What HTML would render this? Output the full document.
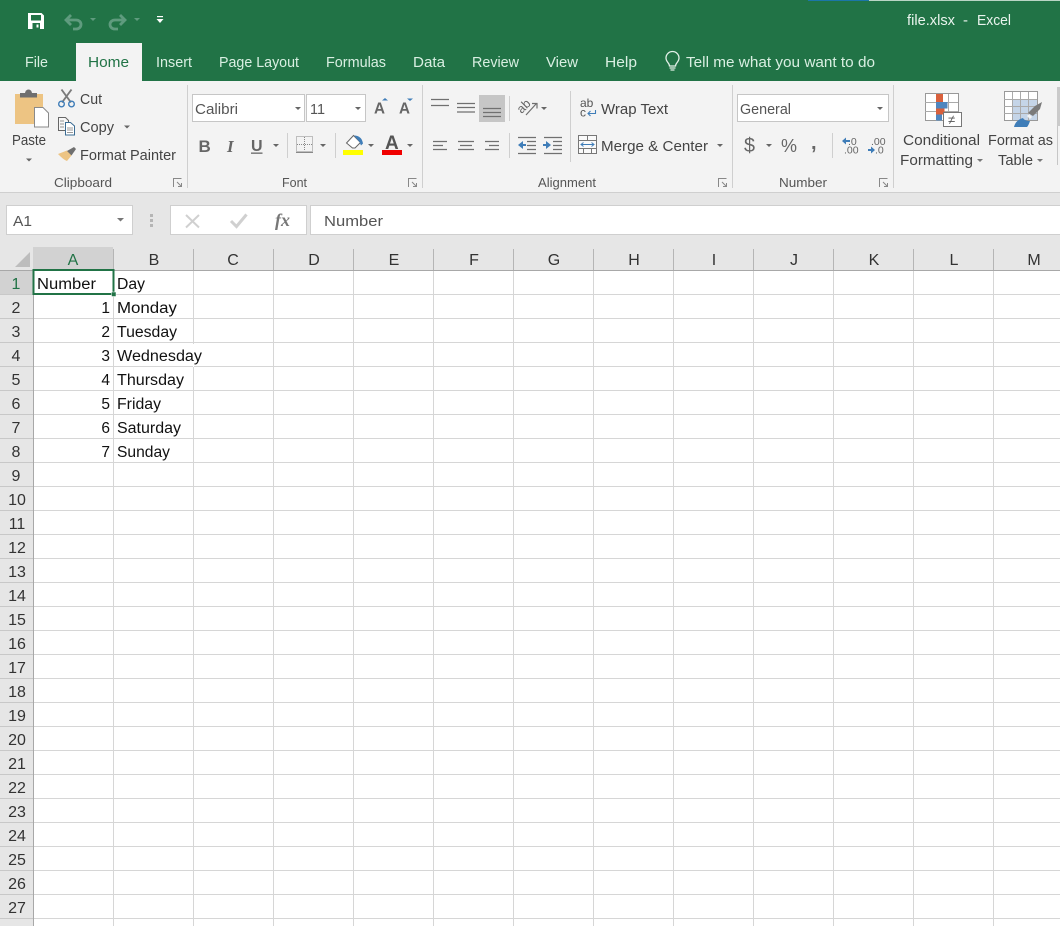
<!DOCTYPE html>
<html><head><meta charset="utf-8"><style>
html,body{margin:0;padding:0;width:1060px;height:926px;overflow:hidden;background:#fff}
svg{display:block}
text{font-family:"Liberation Sans",sans-serif;font-size:14px;fill:#444}
.t{fill:#d9efe2;font-size:15px}
.c{fill:#111;font-size:15.5px}
.h{fill:#333;font-size:16px}
.r{fill:#444;font-size:15px}
.g{fill:#555;font-size:13px}
</style></head><body>
<svg width="1060" height="926" viewBox="0 0 1060 926" xmlns="http://www.w3.org/2000/svg">
<defs>
<pattern id="hl" width="80" height="24" patternUnits="userSpaceOnUse" x="33" y="270"><rect x="0" y="0" width="80" height="1" fill="#d6d6d6"/></pattern>
<pattern id="vl" width="80" height="24" patternUnits="userSpaceOnUse" x="33" y="270"><rect x="0" y="0" width="1" height="24" fill="#d6d6d6"/></pattern>
<pattern id="rl" width="33" height="24" patternUnits="userSpaceOnUse" x="0" y="270"><rect x="0" y="0" width="33" height="1" fill="#c8c8c8"/></pattern>
</defs>
<!-- title bar -->
<rect width="1060" height="81" fill="#217346"/>
<rect x="808" width="61" height="1" fill="#1b76a8"/><rect x="869" width="191" height="1" fill="#b9d5c5"/>
<!-- save -->
<path d="M28 13h13.500l2.500 2.500V29H28z" fill="#fff"/><rect x="31" y="15" width="10" height="5.500" fill="#217346"/><rect x="32.500" y="23" width="7.500" height="6" fill="#217346"/><rect x="36.500" y="24.500" width="2" height="3" fill="#fff"/>
<!-- undo redo -->
<path d="M71 15l-5 5 5 5M66 20h10c3 0 5 2 5 4.500s-2 4.500-5 4.500h-3" fill="none" stroke="#5f9b7e" stroke-width="2.800"/>
<path d="M90 18h6l-3 3z" fill="#5f9b7e"/>
<path d="M120 15l5 5-5 5M125 20h-10c-3 0-5 2-5 4.500s2 4.500 5 4.500h3" fill="none" stroke="#5f9b7e" stroke-width="2.800"/>
<path d="M134 18h6l-3 3z" fill="#5f9b7e"/>
<rect x="157" y="16" width="6" height="1.200" fill="#fff"/><path d="M156.500 19h7l-3.500 4z" fill="#fff"/>
<g class="tt"><text x="907" y="25" class="t" textLength="48" lengthAdjust="spacingAndGlyphs" style="fill:#eaf4ee">file.xlsx</text><text x="963" y="25" class="t" style="fill:#eaf4ee">-</text><text x="977" y="25" class="t" textLength="34" lengthAdjust="spacingAndGlyphs" style="fill:#eaf4ee">Excel</text></g>
<!-- tabs -->
<rect x="76" y="43" width="66" height="38" fill="#f3f3f3"/>
<text x="25" y="67" class="t" textLength="23" lengthAdjust="spacingAndGlyphs">File</text>
<text x="88" y="67" class="t" textLength="41" lengthAdjust="spacingAndGlyphs" style="fill:#217346">Home</text>
<text x="156" y="67" class="t" textLength="36" lengthAdjust="spacingAndGlyphs">Insert</text>
<text x="219" y="67" class="t" textLength="80" lengthAdjust="spacingAndGlyphs">Page Layout</text>
<text x="326" y="67" class="t" textLength="60" lengthAdjust="spacingAndGlyphs">Formulas</text>
<text x="413" y="67" class="t" textLength="32" lengthAdjust="spacingAndGlyphs">Data</text>
<text x="472" y="67" class="t" textLength="47" lengthAdjust="spacingAndGlyphs">Review</text>
<text x="546" y="67" class="t" textLength="32" lengthAdjust="spacingAndGlyphs">View</text>
<text x="605" y="67" class="t" textLength="32" lengthAdjust="spacingAndGlyphs">Help</text>
<path d="M669.500 66c0-3-3.500-4-3.500-8a6.500 6.500 0 0 1 13 0c0 4-3.500 5-3.500 8z" fill="none" stroke="#e2f1e8" stroke-width="1.300"/><path d="M669.500 68h6M670.500 70h4" stroke="#e2f1e8" stroke-width="1.300"/>
<text x="686" y="67" class="t" textLength="189" lengthAdjust="spacingAndGlyphs">Tell me what you want to do</text>
<!-- ribbon -->
<rect y="81" width="1060" height="111" fill="#f3f3f3"/>
<rect y="193" width="1060" height="54" fill="#e6e6e6"/>
<rect y="192" width="1060" height="1" fill="#cfcfcf"/>
<g fill="#cfcfcf"><rect x="187" y="85" width="1" height="103"/><rect x="422" y="85" width="1" height="103"/><rect x="732" y="85" width="1" height="103"/><rect x="893" y="85" width="1" height="103"/>
<rect x="287" y="133" width="1" height="25"/><rect x="335" y="133" width="1" height="25"/><rect x="509" y="96" width="1" height="25"/><rect x="509" y="133" width="1" height="25"/><rect x="570" y="91" width="1" height="71"/><rect x="832" y="133" width="1" height="25"/></g>
<!-- paste -->
<path d="M15 94h28v13h-9v17H15z" fill="#edc483"/>
<rect x="20" y="93" width="17" height="4.500" fill="#6f6f6f"/><path d="M25 93.500a3.500 4 0 0 1 7 0z" fill="#6f6f6f"/>
<path d="M34.500 107.500h8.500l5.500 5.500v14H34.500z" fill="#fff" stroke="#8a8a8a"/>
<text x="12" y="145" class="r" textLength="34" lengthAdjust="spacingAndGlyphs">Paste</text>
<path d="M26 158.500h6l-3 3z" fill="#666"/>
<!-- cut -->
<path d="M61.500 89.500l9.500 13M71.500 89.500l-9.500 13" stroke="#7b7b7b" stroke-width="1.900" fill="none"/><circle cx="61.500" cy="104" r="2.800" fill="none" stroke="#3f7db8" stroke-width="1.400"/><circle cx="71.500" cy="104" r="2.800" fill="none" stroke="#3f7db8" stroke-width="1.400"/>
<text x="80" y="104" class="r" textLength="22" lengthAdjust="spacingAndGlyphs">Cut</text>
<!-- copy -->
<path d="M58.500 117.500h7l3 3v10h-10z" fill="#f7f7f7" stroke="#666"/><path d="M65.500 122.500h5l4 3.500v9h-9z" fill="#fff" stroke="#3b6c93"/><path d="M67 128h6M67 130h6M67 132.500h6M60 121h4M60 124h4M60 127h4" stroke="#777" stroke-width=".8"/>
<text x="80" y="132" class="r" textLength="34" lengthAdjust="spacingAndGlyphs">Copy</text>
<path d="M124 125.500h6l-3 3z" fill="#666"/>
<!-- painter -->
<path d="M58 154l9-3.500 4.500 5-4.500 5.500c-3-1-6-4-9-7z" fill="#edc483"/><path d="M67 151l7-4 2 2-4.500 6.500z" fill="#6f6f6f"/>
<text x="80" y="160" class="r" textLength="96" lengthAdjust="spacingAndGlyphs">Format Painter</text>
<text x="54" y="187" class="g" textLength="58" lengthAdjust="spacingAndGlyphs">Clipboard</text>
<!-- launcher icons -->
<g fill="none" stroke="#888" stroke-width="1"><path d="M173.500 187v-8.500h8M177 182l4.500 4.500M181.500 183v3.500h-3.500"/>
<path d="M408.500 187v-8.500h8M412 182l4.500 4.500M416.500 183v3.500h-3.500"/>
<path d="M718.500 187v-8.500h8M722 182l4.500 4.500M726.500 183v3.500h-3.500"/>
<path d="M879.500 187v-8.500h8M883 182l4.500 4.500M887.500 183v3.500h-3.500"/></g>
<!-- font boxes -->
<rect x="192.500" y="94.500" width="112" height="27" fill="#fff" stroke="#c6c6c6"/>
<rect x="306.500" y="94.500" width="59" height="27" fill="#fff" stroke="#c6c6c6"/>
<text x="195" y="114" class="r" style="fill:#555" textLength="43" lengthAdjust="spacingAndGlyphs">Calibri</text>
<text x="310" y="114" class="r" style="fill:#555" textLength="15" lengthAdjust="spacingAndGlyphs">11</text>
<path d="M295 107h6l-3 3zM355 107h6l-3 3z" fill="#666"/>
<text x="374" y="113.500" style="font-size:16px;fill:#666;font-weight:bold" textLength="11" lengthAdjust="spacingAndGlyphs">A</text><path d="M382 100.500l3-2.500 3 2.500z" fill="#3f7db8"/>
<text x="399" y="113.500" style="font-size:16px;fill:#666;font-weight:bold" textLength="11" lengthAdjust="spacingAndGlyphs">A</text><path d="M407 98.500l3 2.500 3-2.500z" fill="#3f7db8"/>
<text x="198.500" y="152" style="font-size:17px;font-weight:bold;fill:#666">B</text>
<text x="227" y="152" style="font-size:17px;font-weight:bold;font-style:italic;font-family:'Liberation Serif',serif;fill:#666">I</text>
<text x="251" y="151" style="font-size:16px;font-weight:bold;fill:#666">U</text><rect x="251" y="152.500" width="11.500" height="1.300" fill="#666"/>
<path d="M273 144h6l-3 3z" fill="#666"/>
<g fill="none" stroke="#888" stroke-dasharray="1 1"><rect x="296.500" y="136.500" width="16" height="15"/><path d="M304.500 137v14M297 144.500h15"/></g><rect x="296" y="152" width="17" height="1" fill="#888"/>
<path d="M320 144h6l-3 3z" fill="#666"/>
<path d="M346.500 143l7-7.500 7 7-5.500 5.500h-2.500z" fill="#fff" stroke="#666"/><path d="M354 135.500c5 0 8 2.500 9 8l-2 2-1.500-3.500z" fill="#3f7db8"/>
<rect x="343" y="150" width="20" height="5" fill="#ffff00"/>
<path d="M368 144h6l-3 3z" fill="#666"/>
<text x="385" y="149" style="font-size:19px;font-weight:bold;fill:#555">A</text><rect x="382" y="150" width="20" height="5" fill="#f00000"/>
<path d="M407 144h6l-3 3z" fill="#666"/>
<text x="282" y="187" class="g" textLength="25" lengthAdjust="spacingAndGlyphs">Font</text>
<!-- alignment -->
<rect x="479" y="95" width="26" height="27" fill="#c6c6c6"/>
<g stroke="#707070" stroke-width="1.200" fill="none">
<path d="M431 99.500h18M431 105.500h18"/>
<path d="M457 103.500h18M457 107.500h18M457 112h18"/>
<path d="M483 108.500h18M483 112.500h18M483 116.500h18"/>
<path d="M433 141.500h14M433 145.500h10M433 149.500h14"/>
<path d="M458 141.500h16M460 145.500h12M458 149.500h16"/>
<path d="M485 141.500h14M489 145.500h10M485 149.500h14"/>
<path d="M518 137.500h18M527 141.500h9M527 145.500h9M527 149.500h9M518 153.500h18"/>
<path d="M544 137.500h18M553 141.500h9M553 145.500h9M553 149.500h9M544 153.500h18"/>
<path d="M526 115l10-11M532 103.500h5v5"/>
</g>
<path d="M518 145l5-4v3h3v2h-3v3z" fill="#3f7db8"/><path d="M551 145l-5-4v3h-3v2h3v3z" fill="#3f7db8"/>
<text x="517" y="111" transform="rotate(-45 523 107)" style="font-size:12.500px;fill:#666">ab</text>
<path d="M541 107h6l-3 3z" fill="#666"/>
<text x="580" y="107" style="font-size:12px;fill:#555">ab</text><text x="580" y="116.500" style="font-size:12px;fill:#555">c</text>
<path d="M595.500 110v3.500h-7.500M590.500 111l-2.500 2.500 2.500 2.500" fill="none" stroke="#3f7db8" stroke-width="1.100"/>
<text x="601" y="114" class="r" textLength="67" lengthAdjust="spacingAndGlyphs">Wrap Text</text>
<rect x="578.500" y="135.500" width="18" height="18" fill="#fafafa" stroke="#777"/>
<path d="M579 140.500h17M579 148.500h17M587.500 136v4M583.500 149v4M591.500 149v4" stroke="#777" fill="none"/>
<path d="M581 144.500h13M583.500 142.500l-2.500 2 2.500 2M591.500 142.500l2.500 2-2.500 2" fill="none" stroke="#3f7db8"/>
<text x="601" y="151" class="r" textLength="107" lengthAdjust="spacingAndGlyphs">Merge &amp; Center</text>
<path d="M717 144h6l-3 3z" fill="#666"/>
<text x="538" y="187" class="g" textLength="58" lengthAdjust="spacingAndGlyphs">Alignment</text>
<!-- number -->
<rect x="737.500" y="94.500" width="151" height="27" fill="#fff" stroke="#c6c6c6"/>
<text x="740" y="114" class="r" style="fill:#555" textLength="51" lengthAdjust="spacingAndGlyphs">General</text>
<path d="M877 107h6l-3 3z" fill="#666"/>
<text x="744" y="152" style="font-size:20px;fill:#666" textLength="11" lengthAdjust="spacingAndGlyphs">$</text><path d="M766 144h6l-3 3z" fill="#666"/>
<text x="781" y="152" style="font-size:18px;fill:#666" textLength="16" lengthAdjust="spacingAndGlyphs">%</text>
<text x="811" y="149" style="font-size:20px;font-weight:bold;fill:#666">,</text>
<text x="848" y="145" style="font-size:10.500px;fill:#666">.0</text><text x="844" y="153.500" style="font-size:10.500px;fill:#666">.00</text><path d="M842 141l4-3.500v2.500h4v2h-4v2.500z" fill="#3f7db8"/>
<text x="871" y="145" style="font-size:10.500px;fill:#666">.00</text><text x="875" y="153.500" style="font-size:10.500px;fill:#666">.0</text><path d="M875 150l-4-3.500v2.500h-3v2h3v2.500z" fill="#3f7db8"/>
<text x="779" y="187" class="g" textLength="48" lengthAdjust="spacingAndGlyphs">Number</text>
<!-- styles -->
<rect x="925.500" y="93.500" width="33" height="27" fill="#fff" stroke="#999"/>
<path d="M925 102.500h33M925 111.500h33M936.500 94v27M948.500 94v27" stroke="#aaa" fill="none"/>
<rect x="936" y="94" width="7" height="8" fill="#d9603c"/><rect x="936" y="102" width="11.500" height="6.500" fill="#4f86bf"/><rect x="936" y="108.500" width="8.500" height="6" fill="#d9603c"/><rect x="936" y="114.500" width="6" height="6" fill="#4f86bf"/>
<rect x="943.500" y="112.500" width="18" height="14" fill="#fff" stroke="#777"/>
<text x="948" y="124" style="font-size:13px;fill:#555">≠</text>
<rect x="1004.500" y="91.500" width="33" height="29" fill="#fff" stroke="#999"/><rect x="1012" y="99" width="25" height="21" fill="#c5d5e8"/>
<path d="M1004 99.500h33M1004 106.500h33M1004 113.500h33M1012.500 92v28M1020.500 92v28M1028.500 92v28" stroke="#aaa" fill="none"/>
<path d="M1028 113l7-7 7-4-2 7-7 7z" fill="#7a7a7a"/><path d="M1031 118l-3-3" stroke="#f3f3f3" stroke-width="3"/><path d="M1014 127c1-5 5-8 9-9 1 2 4 3 7 3-1 3-2 5-3 6z" fill="#3f7db8"/>
<text x="903" y="145" class="r" textLength="77" lengthAdjust="spacingAndGlyphs">Conditional</text>
<text x="900" y="165" class="r" textLength="73" lengthAdjust="spacingAndGlyphs">Formatting</text><path d="M977 159h6l-3 3z" fill="#777"/>
<text x="988" y="145" class="r" textLength="65" lengthAdjust="spacingAndGlyphs">Format as</text>
<text x="998" y="165" class="r" textLength="35" lengthAdjust="spacingAndGlyphs">Table</text><path d="M1037 159h6l-3 3z" fill="#777"/>
<rect x="1057" y="87" width="3" height="39" fill="#cacaca"/><rect x="1057" y="126" width="1" height="39" fill="#c6c6c6"/>
<!-- formula bar -->
<rect x="6.500" y="205.500" width="126" height="29" fill="#fff" stroke="#cfcfcf"/>
<text x="13" y="226" class="r" style="fill:#555" textLength="19" lengthAdjust="spacingAndGlyphs">A1</text>
<path d="M117 218h7l-3.500 3.500z" fill="#777"/>
<rect x="150" y="214" width="3" height="3" fill="#b5b5b5"/><rect x="150" y="219" width="3" height="3" fill="#b5b5b5"/><rect x="150" y="224" width="3" height="3" fill="#b5b5b5"/>
<rect x="170.500" y="205.500" width="136" height="29" fill="#fff" stroke="#cfcfcf"/>
<path d="M186 215l13 12.500M199 215l-13 12.500" stroke="#d0d0d0" stroke-width="2" fill="none"/>
<path d="M231 221l5.500 5.500 10-12" stroke="#d0d0d0" stroke-width="3" fill="none"/>
<text x="275" y="226" style="font-family:'Liberation Serif',serif;font-style:italic;font-weight:bold;font-size:18px;fill:#777">fx</text>
<rect x="310.500" y="205.500" width="760" height="29" fill="#fff" stroke="#cfcfcf"/>
<text x="324" y="226" class="r" style="fill:#555" textLength="59" lengthAdjust="spacingAndGlyphs">Number</text>
<!-- headers -->
<rect y="247" width="1060" height="23" fill="#e6e6e6"/>
<rect x="33" y="247" width="80" height="23" fill="#d2d2d2"/>
<rect y="270" width="33" height="656" fill="#e6e6e6"/>
<rect y="270" width="33" height="24" fill="#d2d2d2"/>
<path d="M30 252v15H15z" fill="#bdbdbd"/>
<!-- grid -->
<rect x="33" y="270" width="1027" height="656" fill="#fff"/>
<rect x="33" y="270" width="1027" height="656" fill="url(#hl)"/>
<rect x="33" y="270" width="1027" height="656" fill="url(#vl)"/>
<rect y="270" width="33" height="656" fill="url(#rl)"/>
<rect x="33" y="270" width="1" height="656" fill="#a8a8a8"/>
<rect y="270" width="1060" height="1" fill="#a8a8a8"/>
<g fill="#b5b5b5"><rect x="113" y="249" width="1" height="21"/><rect x="193" y="249" width="1" height="21"/><rect x="273" y="249" width="1" height="21"/><rect x="353" y="249" width="1" height="21"/><rect x="433" y="249" width="1" height="21"/><rect x="513" y="249" width="1" height="21"/><rect x="593" y="249" width="1" height="21"/><rect x="673" y="249" width="1" height="21"/><rect x="753" y="249" width="1" height="21"/><rect x="833" y="249" width="1" height="21"/><rect x="913" y="249" width="1" height="21"/><rect x="993" y="249" width="1" height="21"/></g>
<g text-anchor="middle">
<text x="73" y="265" class="h" style="fill:#217346">A</text><text x="154" y="265" class="h">B</text><text x="233" y="265" class="h">C</text><text x="314" y="265" class="h">D</text><text x="394" y="265" class="h">E</text><text x="474" y="265" class="h">F</text><text x="554" y="265" class="h">G</text><text x="634" y="265" class="h">H</text><text x="714" y="265" class="h">I</text><text x="794" y="265" class="h">J</text><text x="874" y="265" class="h">K</text><text x="954" y="265" class="h">L</text><text x="1034" y="265" class="h">M</text>
</g>
<g text-anchor="middle">
<text x="16" y="289" class="h" style="fill:#217346">1</text><text x="16" y="313" class="h">2</text><text x="16" y="337" class="h">3</text><text x="16" y="361" class="h">4</text><text x="16" y="385" class="h">5</text><text x="16" y="409" class="h">6</text><text x="16" y="433" class="h">7</text><text x="16" y="457" class="h">8</text><text x="16" y="481" class="h">9</text><text x="17" y="505" class="h">10</text><text x="17" y="529" class="h">11</text><text x="17" y="553" class="h">12</text><text x="17" y="577" class="h">13</text><text x="17" y="601" class="h">14</text><text x="17" y="625" class="h">15</text><text x="17" y="649" class="h">16</text><text x="17" y="673" class="h">17</text><text x="17" y="697" class="h">18</text><text x="17" y="721" class="h">19</text><text x="17" y="745" class="h">20</text><text x="17" y="769" class="h">21</text><text x="17" y="793" class="h">22</text><text x="17" y="817" class="h">23</text><text x="17" y="841" class="h">24</text><text x="17" y="865" class="h">25</text><text x="17" y="889" class="h">26</text><text x="17" y="913" class="h">27</text><text x="17" y="937" class="h">28</text>
</g>
<!-- cells -->
<text x="37" y="289" class="c" textLength="59" lengthAdjust="spacingAndGlyphs">Number</text>
<text x="117" y="289" class="c" textLength="28" lengthAdjust="spacingAndGlyphs">Day</text>
<g text-anchor="end"><text x="110" y="313" class="c">1</text><text x="110" y="337" class="c">2</text><text x="110" y="361" class="c">3</text><text x="110" y="385" class="c">4</text><text x="110" y="409" class="c">5</text><text x="110" y="433" class="c">6</text><text x="110" y="457" class="c">7</text></g>
<text x="117" y="313" class="c" textLength="60" lengthAdjust="spacingAndGlyphs">Monday</text>
<text x="117" y="337" class="c" textLength="60" lengthAdjust="spacingAndGlyphs">Tuesday</text>
<rect x="193" y="344" width="1" height="23" fill="#fff"/>
<text x="117" y="361" class="c" textLength="85" lengthAdjust="spacingAndGlyphs">Wednesday</text>
<text x="117" y="385" class="c" textLength="67" lengthAdjust="spacingAndGlyphs">Thursday</text>
<text x="117" y="409" class="c" textLength="44" lengthAdjust="spacingAndGlyphs">Friday</text>
<text x="117" y="433" class="c" textLength="64" lengthAdjust="spacingAndGlyphs">Saturday</text>
<text x="117" y="457" class="c" textLength="53" lengthAdjust="spacingAndGlyphs">Sunday</text>
<!-- selection -->
<rect x="33.500" y="270" width="80" height="24" fill="none" stroke="#217346" stroke-width="2"/>
<rect x="111.500" y="292" width="4.500" height="4.500" fill="#217346" stroke="#fff" stroke-width=".5"/>
</svg>
</body></html>
